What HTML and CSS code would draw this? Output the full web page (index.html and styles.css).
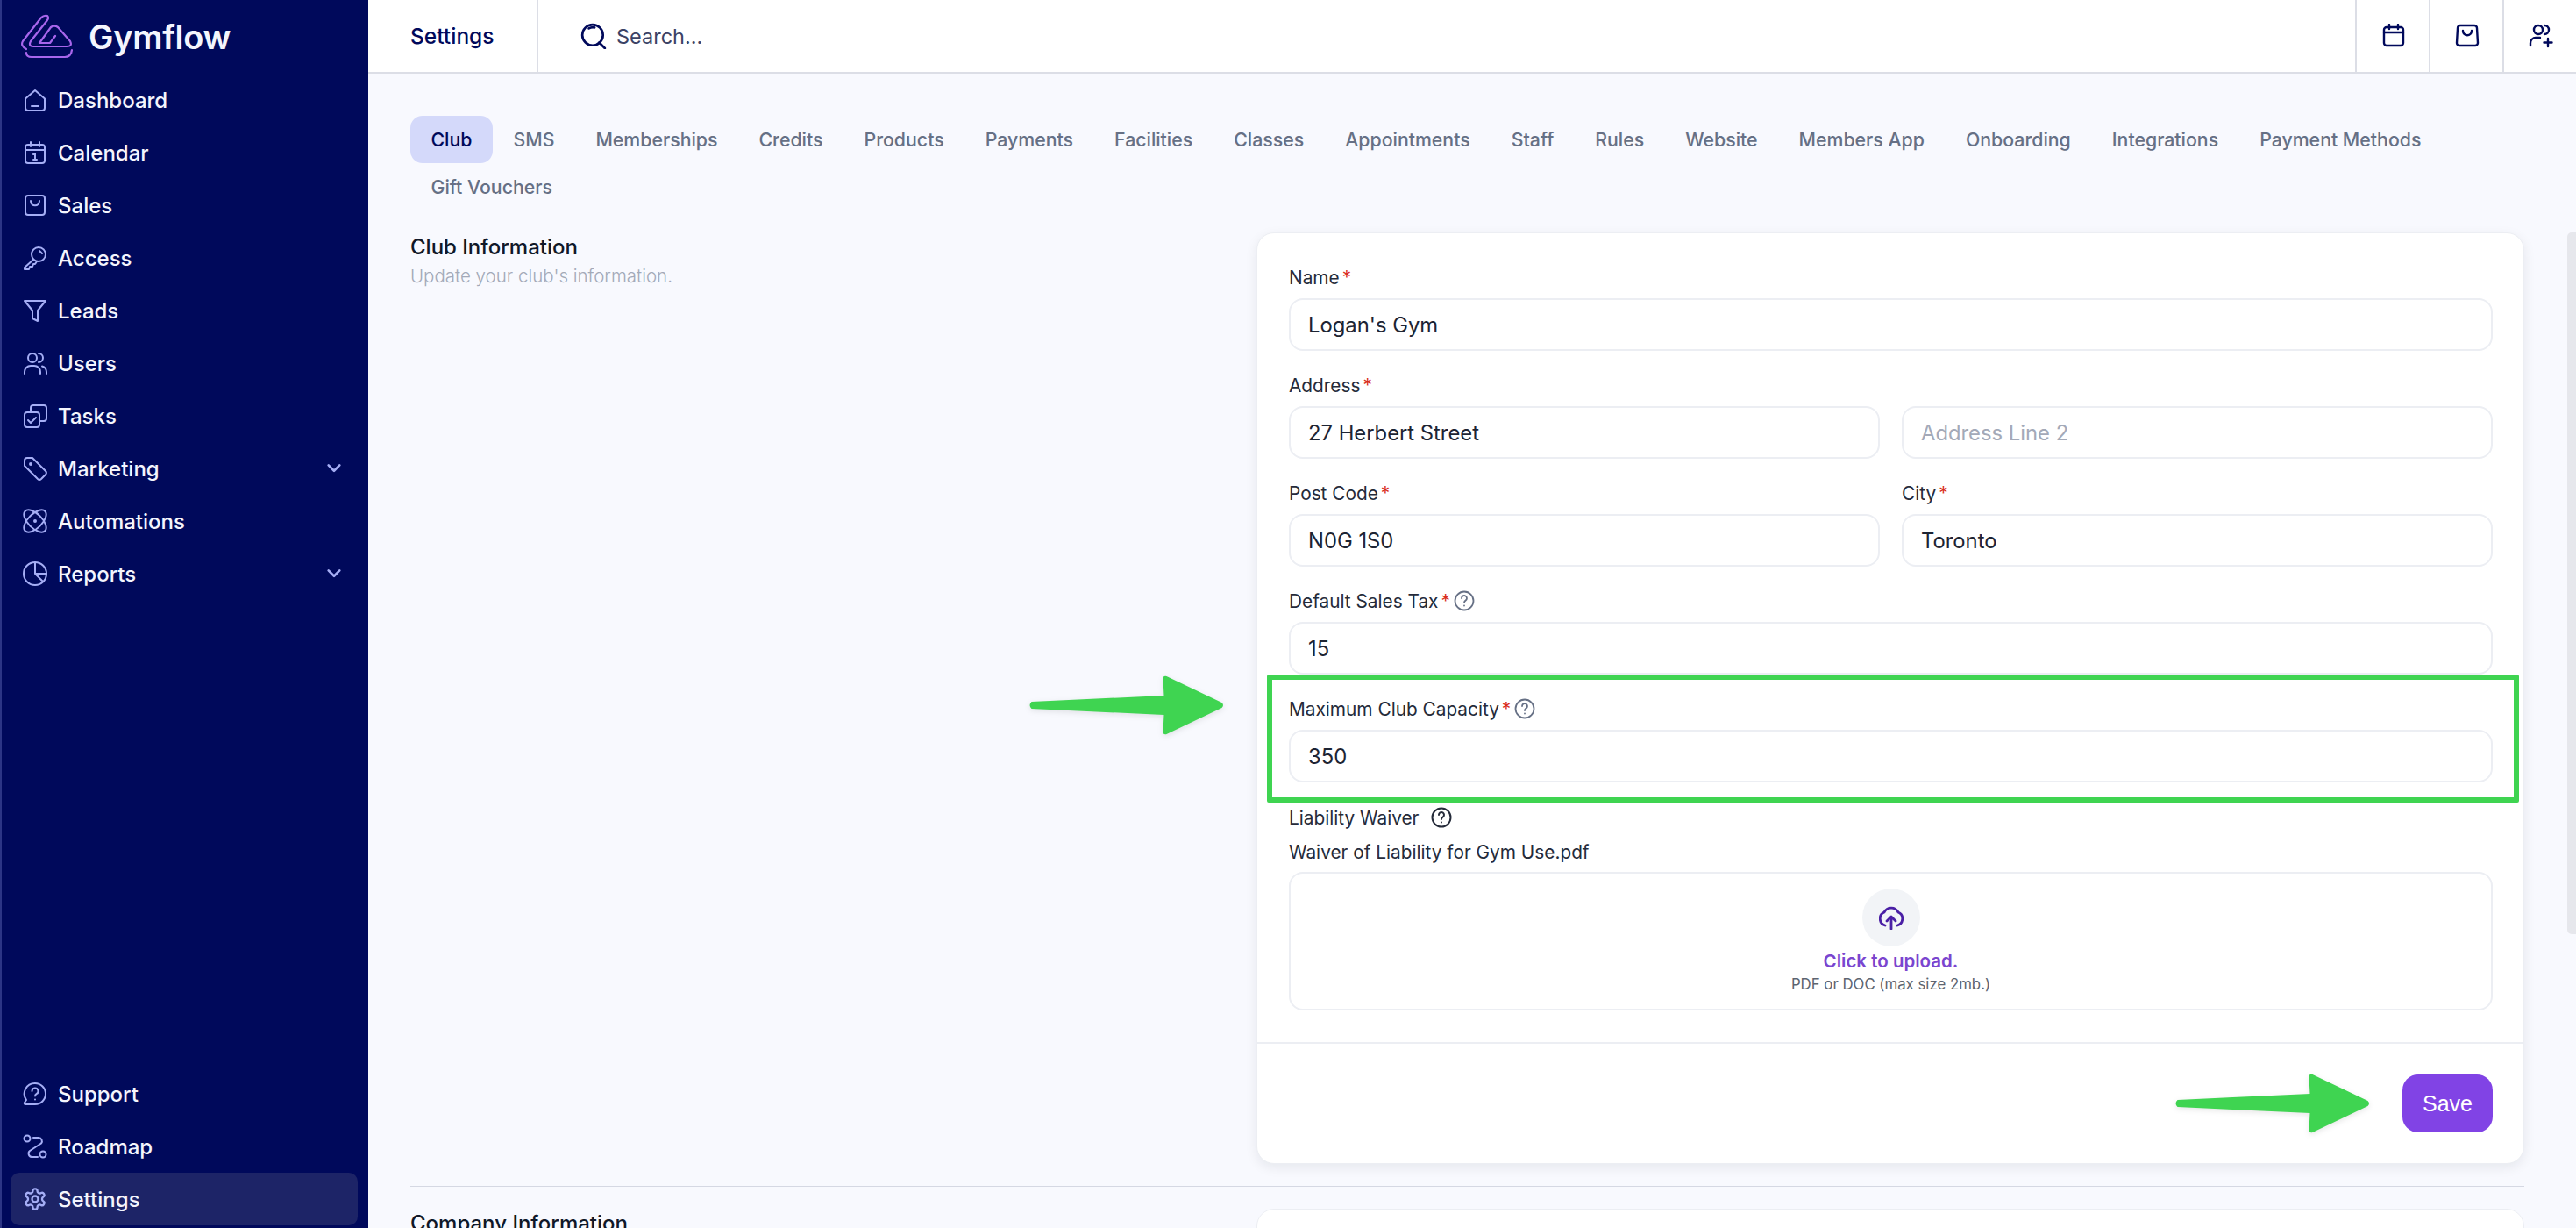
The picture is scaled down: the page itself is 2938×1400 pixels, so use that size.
FILE: index.html
```html
<!DOCTYPE html>
<html>
<head>
    <title>Gymflow Settings</title>
    <link rel="stylesheet" href="styles.css">
</head>
<body>
    <div class="sidebar">
        <div class="brand">
            <svg class="brand-mark" viewBox="22 16 62 52" fill="none" stroke="#a866ec" stroke-width="2.2" stroke-linejoin="round" stroke-linecap="round">
                <path d="M30 56Q23 52 26 47L47 20Q50 17 54 18Q56 20 54 23L35 47Q32 53 38 53H76Q83 53 80 47L66 31Q62 28 58 31L45 49H57L63 41"/>
                <path d="M30 60Q30 65 36 65H74Q81 65 82 57"/>
            </svg>
            <span class="brand-name">Gymflow</span>
        </div>
        <a class="nav-item"><svg class="nav-icon" viewBox="0 0 28 28"><path d="M3 12.500 14 3l11 9.500V23a3 3 0 0 1-3 3H6a3 3 0 0 1-3-3z"/><path d="M10 21h8"/></svg>Dashboard</a>
        <a class="nav-item"><svg class="nav-icon" viewBox="0 0 28 28"><rect x="3" y="5" width="22" height="21" rx="3"/><path d="M3 11h22M9 2v5M19 2v5"/><path d="M12 16l2-1v7M12 22h4"/></svg>Calendar</a>
        <a class="nav-item"><svg class="nav-icon" viewBox="0 0 28 28"><path d="M6 3h16a3 3 0 0 1 3 3v16a3 3 0 0 1-3 3H6a3 3 0 0 1-3-3V6a3 3 0 0 1 3-3z"/><path d="M9 9c0 7 10 7 10 0"/></svg>Sales</a>
        <a class="nav-item"><svg class="nav-icon" viewBox="0 0 28 28"><circle cx="18" cy="10" r="8"/><path d="M12 16 2 25v2h5l1-3h3l1-3h2l2-3"/><path d="M19 6l3 3"/></svg>Access</a>
        <a class="nav-item"><svg class="nav-icon" viewBox="0 0 28 28"><path d="M2 3h24L17 14v12l-6-3v-9z"/></svg>Leads</a>
        <a class="nav-item"><svg class="nav-icon" viewBox="0 0 28 28"><circle cx="11" cy="8" r="5"/><path d="M2 26v-2a7 7 0 0 1 7-7h4a7 7 0 0 1 7 7v2M18 3a5 5 0 0 1 0 10M22 17.500a7 7 0 0 1 5 6.500v2"/></svg>Users</a>
        <a class="nav-item"><svg class="nav-icon" viewBox="0 0 28 28"><rect x="2" y="10" width="17" height="17" rx="3"/><path d="M9 10V5a3 3 0 0 1 3-3h12a3 3 0 0 1 3 3v12a3 3 0 0 1-3 3h-5"/><path d="M6 19l3 3 6-6"/></svg>Tasks</a>
        <a class="nav-item"><svg class="nav-icon" viewBox="0 0 28 28"><path d="M2 5a3 3 0 0 1 3-3h6l15 15a3 3 0 0 1 0 4l-5 5a3 3 0 0 1-4 0L2 11z"/><circle cx="9" cy="9" r="1"/></svg>Marketing<svg class="nav-chevron" viewBox="0 0 20 20"><path d="M3 6l7 7 7-7"/></svg></a>
        <a class="nav-item"><svg class="nav-icon" viewBox="0 0 28 28"><ellipse cx="14" cy="14" rx="8" ry="16" transform="rotate(45 14 14)"/><ellipse cx="14" cy="14" rx="8" ry="16" transform="rotate(-45 14 14)"/><circle cx="14" cy="14" r="1"/></svg>Automations</a>
        <a class="nav-item"><svg class="nav-icon" viewBox="0 0 28 28"><circle cx="14" cy="14" r="13"/><path d="M14 1v13l9 9M14 14h13"/></svg>Reports<svg class="nav-chevron" viewBox="0 0 20 20"><path d="M3 6l7 7 7-7"/></svg></a>
        <div class="nav-bottom">
            <a class="nav-item"><svg class="nav-icon" viewBox="0 0 28 28"><path d="M14 2a12 12 0 0 1 0 24H3c-1 0-1.500-1-1-2l2-3A12 12 0 0 1 14 2z"/><path d="M10.500 11a3.500 3.500 0 1 1 5 3.200c-1 .6-1.500 1.300-1.500 2.300M14 20.500v.1"/></svg>Support</a>
            <a class="nav-item"><svg class="nav-icon" viewBox="0 0 28 28"><circle cx="5" cy="5" r="3.500"/><circle cx="23" cy="23" r="3.500"/><path d="M12 4h6a4 4 0 0 1 3 6.500L8 19a4 4 0 0 0 2 7h7"/></svg>Roadmap</a>
            <a class="nav-item active"><svg class="nav-icon gear" viewBox="0 0 24 24"><path d="M12.220 2h-.44a2 2 0 0 0-2 2v.18a2 2 0 0 1-1 1.730l-.43.25a2 2 0 0 1-2 0l-.15-.08a2 2 0 0 0-2.730.73l-.22.38a2 2 0 0 0 .73 2.730l.15.1a2 2 0 0 1 1 1.720v.51a2 2 0 0 1-1 1.740l-.15.09a2 2 0 0 0-.73 2.730l.22.38a2 2 0 0 0 2.730.73l.15-.08a2 2 0 0 1 2 0l.43.25a2 2 0 0 1 1 1.730V20a2 2 0 0 0 2 2h.44a2 2 0 0 0 2-2v-.18a2 2 0 0 1 1-1.730l.43-.25a2 2 0 0 1 2 0l.15.08a2 2 0 0 0 2.730-.73l.22-.39a2 2 0 0 0-.73-2.730l-.15-.08a2 2 0 0 1-1-1.740v-.5a2 2 0 0 1 1-1.740l.15-.09a2 2 0 0 0 .73-2.730l-.22-.38a2 2 0 0 0-2.730-.73l-.15.08a2 2 0 0 1-2 0l-.43-.25a2 2 0 0 1-1-1.730V4a2 2 0 0 0-2-2z"/><circle cx="12" cy="12" r="3"/></svg>Settings</a>
        </div>
    </div>

    <div class="main">
        <div class="topbar">
            <div class="page-title">Settings</div>
            <div class="search">
                <svg class="search-icon" viewBox="0 0 28 28"><circle cx="13" cy="13" r="11"/><path d="M20 21l6 6M9 6a8 8 0 0 1 6-1"/></svg>
                <span>Search...</span>
            </div>
            <div class="top-btn"><svg class="top-icon" viewBox="0 0 28 28"><rect x="3" y="4" width="22" height="21" rx="3"/><path d="M3 10h22M9 1v5M19 1v5"/></svg></div>
            <div class="top-btn"><svg class="top-icon" viewBox="0 0 28 28"><path d="M6 2h16a3 3 0 0 1 3 3l1 17a3 3 0 0 1-3 3H5a3 3 0 0 1-3-3L3 5a3 3 0 0 1 3-3z"/><path d="M9 8c0 7 10 7 10 0"/></svg></div>
            <div class="top-btn"><svg class="top-icon" viewBox="0 0 28 28"><circle cx="11" cy="7" r="5"/><path d="M2 25v-3a6 6 0 0 1 6-6h5M18 2a5 5 0 0 1 0 10M22 17v9M17.500 21.500h9"/></svg></div>
        </div>

        <div class="content">
            <div class="tabs">
                <a class="tab active">Club</a>
                <a class="tab">SMS</a>
                <a class="tab">Memberships</a>
                <a class="tab">Credits</a>
                <a class="tab">Products</a>
                <a class="tab">Payments</a>
                <a class="tab">Facilities</a>
                <a class="tab">Classes</a>
                <a class="tab">Appointments</a>
                <a class="tab">Staff</a>
                <a class="tab">Rules</a>
                <a class="tab">Website</a>
                <a class="tab">Members App</a>
                <a class="tab">Onboarding</a>
                <a class="tab">Integrations</a>
                <a class="tab">Payment Methods</a>
                <a class="tab">Gift Vouchers</a>
            </div>

            <div class="section">
                <div class="section-info">
                    <div class="section-title">Club Information</div>
                    <div class="section-sub">Update your club's information.</div>
                </div>
                <div class="card">
                    <div class="card-body">
                        <div class="field">
                            <label>Name<span class="req">*</span></label>
                            <div class="input">Logan's Gym</div>
                        </div>
                        <div class="field">
                            <label>Address<span class="req">*</span></label>
                            <div class="two">
                                <div class="input">27 Herbert Street</div>
                                <div class="input placeholder">Address Line 2</div>
                            </div>
                        </div>
                        <div class="two">
                            <div class="field">
                                <label>Post Code<span class="req">*</span></label>
                                <div class="input">N0G 1S0</div>
                            </div>
                            <div class="field">
                                <label>City<span class="req">*</span></label>
                                <div class="input">Toronto</div>
                            </div>
                        </div>
                        <div class="field">
                            <label>Default Sales Tax<span class="req">*</span><svg class="help" viewBox="0 0 24 24"><circle cx="12" cy="12" r="10.500"/><path d="M9 9a3 3 0 1 1 4.500 2.600c-1 .6-1.500 1.200-1.500 2.400M12 17.500v.1"/></svg></label>
                            <div class="input">15</div>
                        </div>
                        <div class="field">
                            <label>Maximum Club Capacity<span class="req">*</span><svg class="help" viewBox="0 0 24 24"><circle cx="12" cy="12" r="10.500"/><path d="M9 9a3 3 0 1 1 4.500 2.600c-1 .6-1.500 1.200-1.500 2.400M12 17.500v.1"/></svg></label>
                            <div class="input">350</div>
                        </div>
                        <div class="waiver">
                            <label class="waiver-label">Liability Waiver<svg class="help dark" viewBox="0 0 24 24"><circle cx="12" cy="12" r="10.500"/><path d="M9 9a3 3 0 1 1 4.500 2.600c-1 .6-1.500 1.200-1.500 2.400M12 17.500v.1"/></svg></label>
                            <div class="file-name">Waiver of Liability for Gym Use.pdf</div>
                            <div class="upload">
                                <div class="upload-circle">
                                    <svg class="upload-icon" viewBox="0 0 28 28"><path d="M7 23a8 8 0 0 1-1-15 9 9 0 0 1 16 0 8 8 0 0 1-1 15"/><path d="M14 27V14M9 18l5-5 5 5"/></svg>
                                </div>
                                <div class="upload-link">Click to upload.</div>
                                <div class="upload-hint">PDF or DOC (max size 2mb.)</div>
                            </div>
                        </div>
                    </div>
                    <div class="card-foot">
                        <button class="save">Save</button>
                    </div>
                </div>
            </div>

            <div class="section-line"></div>

            <div class="section">
                <div class="section-info">
                    <div class="section-title">Company Information</div>
                </div>
                <div class="card next"></div>
            </div>
        </div>
        <div class="scroll-thumb"></div>
    </div>

    <!-- annotations drawn over the screenshot -->
    <div class="highlight"></div>
    <svg class="arrow arrow-one" viewBox="0 0 224 68"><path d="M4 30 155 23 154 4Q154 0 158 1L221 31Q224 34 221 37L158 67Q154 68 154 64L155 45 4 38Q0 34 4 30z"/></svg>
    <svg class="arrow arrow-two" viewBox="0 0 224 68"><path d="M4 30 155 23 154 4Q154 0 158 1L221 31Q224 34 221 37L158 67Q154 68 154 64L155 45 4 38Q0 34 4 30z"/></svg>
</body>
</html>
```

FILE: styles.css
```css
* {
    box-sizing: border-box;
}
html, body {
    height: 100%;
}
body {
    margin: 0;
    display: flex;
    height: 1400px;
    overflow: hidden;
    font-family: Inter, "Liberation Sans", sans-serif;
    background-color: #f8f9fe;
    color: #101828;
}

/* sidebar */
.sidebar {
    width: 420px;
    height: 100%;
    flex-shrink: 0;
    display: flex;
    flex-direction: column;
    background-color: #00095b;
    border-left: 2px solid #2c3585;
    padding: 0 12px 3px 10px;
}
.brand {
    height: 84px;
    display: flex;
    align-items: center;
    padding-left: 10px;
}
.brand-mark {
    width: 62px;
    height: 52px;
    flex-shrink: 0;
}
.brand-name {
    margin-left: 17px;
    font-size: 38px;
    font-weight: 600;
    color: #f4f5fd;
    letter-spacing: -0.3px;
}
.nav-item {
    display: flex;
    align-items: center;
    height: 60px;
    padding-left: 14px;
    border-radius: 10px;
    font-size: 24px;
    font-weight: 500;
    color: #f4f5fd;
}
.nav-item.active {
    background-color: #1d2467;
}
.nav-icon {
    width: 28px;
    height: 28px;
    margin-right: 12px;
    flex-shrink: 0;
    fill: none;
    stroke: #a5aef5;
    stroke-width: 2;
    stroke-linecap: round;
    stroke-linejoin: round;
}
.nav-chevron {
    width: 18px;
    height: 18px;
    margin-left: auto;
    margin-right: 18px;
    fill: none;
    stroke: #a5aef5;
    stroke-width: 3;
    stroke-linecap: round;
    stroke-linejoin: round;
}
.nav-bottom {
    margin-top: auto;
}

/* top bar */
.main {
    position: relative;
    flex: 1;
    min-width: 0;
    height: 100%;
    display: flex;
    flex-direction: column;
}
.topbar {
    height: 84px;
    flex-shrink: 0;
    display: flex;
    align-items: stretch;
    background-color: #fff;
    border-bottom: 2px solid #dcdee6;
}
.page-title {
    width: 194px;
    padding-left: 48px;
    display: flex;
    align-items: center;
    border-right: 2px solid #dcdee6;
    font-size: 24.500px;
    font-weight: 500;
    color: #00095b;
}
.search {
    flex: 1;
    display: flex;
    align-items: center;
    padding-left: 48px;
    font-size: 23.500px;
    color: #3b4265;
}
.search-icon {
    width: 30px;
    height: 30px;
    margin-right: 11px;
    fill: none;
    stroke: #00095b;
    stroke-width: 2.500;
    stroke-linecap: round;
}
.top-btn {
    width: 84px;
    display: flex;
    align-items: center;
    justify-content: center;
    border-left: 2px solid #dcdee6;
}
.top-icon {
    width: 28px;
    height: 28px;
    margin-left: 2px;
    fill: none;
    stroke: #00095b;
    stroke-width: 2.400;
    stroke-linecap: round;
    stroke-linejoin: round;
}

/* content */
.content {
    flex: 1;
    min-height: 0;
    padding: 48px 59px 0 48px;
    overflow: hidden;
}
.tabs {
    display: flex;
    flex-wrap: wrap;
}
.tab {
    height: 54px;
    padding: 0 23.500px;
    display: flex;
    align-items: center;
    border-radius: 14px;
    font-size: 21.300px;
    font-weight: 500;
    color: #667085;
}
.tab.active {
    background-color: #d4d9fa;
    color: #00095b;
}
.section {
    display: flex;
    margin-top: 25px;
}
.section-info {
    width: 965px;
    flex-shrink: 0;
}
.section-title {
    font-size: 24px;
    font-weight: 500;
    line-height: 34px;
    color: #101828;
}
.section-sub {
    font-size: 20.500px;
    font-weight: 300;
    line-height: 32px;
    color: #a3a9b8;
}
.card {
    flex: 1;
    background-color: #fff;
    border: 1px solid #eceef3;
    border-radius: 20px;
    box-shadow: 0 4px 14px rgba(16, 24, 40, 0.08);
}
.card.next {
    height: 60px;
    box-shadow: none;
}
.card-body {
    padding: 32px 35px 36px 36px;
}
.card-foot {
    height: 138px;
    padding-right: 35px;
    display: flex;
    align-items: center;
    justify-content: flex-end;
    border-top: 2px solid #eceef3;
}
.field {
    margin-bottom: 21px;
}
.field label, .waiver-label {
    height: 36px;
    display: flex;
    align-items: center;
    font-size: 20.800px;
    font-weight: 400;
    color: #252b3a;
}
.field label {
    margin-bottom: 6px;
}
.req {
    margin-left: 3px;
    color: #d92d20;
}
.help {
    width: 24px;
    height: 24px;
    margin-left: 4px;
    fill: none;
    stroke: #667085;
    stroke-width: 1.800;
    stroke-linecap: round;
}
.help.dark {
    margin-left: 14px;
    stroke: #252b3a;
    stroke-width: 2;
}
.input {
    height: 60px;
    padding-left: 20px;
    display: flex;
    align-items: center;
    border: 2px solid #eceef3;
    border-radius: 16px;
    font-size: 23.800px;
    font-weight: 400;
    color: #1d2433;
}
.input.placeholder {
    color: #a3a9b8;
}
.two {
    display: grid;
    grid-template-columns: 1fr 1fr;
    gap: 25px;
}
.waiver {
    padding-top: 4px;
}
.waiver-label {
    height: 30px;
}
.file-name {
    height: 36px;
    margin-top: 6px;
    margin-bottom: 5px;
    display: flex;
    align-items: center;
    font-size: 20.800px;
    font-weight: 400;
    color: #252b3a;
}
.upload {
    height: 158px;
    padding-top: 17px;
    display: flex;
    flex-direction: column;
    align-items: center;
    border: 2px solid #eceef3;
    border-radius: 16px;
}
.upload-circle {
    width: 66px;
    height: 66px;
    display: flex;
    align-items: center;
    justify-content: center;
    border-radius: 50%;
    background-color: #f2f4f7;
}
.upload-icon {
    width: 28px;
    height: 28px;
    fill: none;
    stroke: #4a1fa5;
    stroke-width: 2.800;
    stroke-linecap: round;
    stroke-linejoin: round;
}
.upload-link {
    margin-top: 4px;
    font-size: 20.500px;
    font-weight: 600;
    color: #7a45cf;
}
.upload-hint {
    margin-top: 4px;
    font-size: 16.800px;
    font-weight: 400;
    color: #5d6470;
}
.save {
    width: 103px;
    height: 66px;
    border: 0;
    border-radius: 18px;
    background-color: #8143e5;
    color: #fff;
    font-family: "Liberation Sans", Arial, sans-serif;
    font-size: 25px;
}
.section-line {
    margin-top: 25px;
    height: 1px;
    background-color: #d5d8e3;
}
.scroll-thumb {
    position: absolute;
    top: 265px;
    right: 0;
    width: 10px;
    height: 800px;
    border-radius: 5px 0 0 5px;
    background-color: #e6e7ec;
}

/* green annotations */
.highlight {
    position: absolute;
    left: 1445px;
    top: 769px;
    width: 1428px;
    height: 146px;
    border: 6px solid #3fd451;
    border-radius: 2px;
}
.arrow {
    position: absolute;
    width: 225px;
    height: 68px;
    fill: #3fd451;
    filter: drop-shadow(0 2px 3px rgba(0, 0, 0, 0.1));
}
.arrow-one {
    left: 1172px;
    top: 770px;
}
.arrow-two {
    left: 2479px;
    top: 1224px;
}
```
